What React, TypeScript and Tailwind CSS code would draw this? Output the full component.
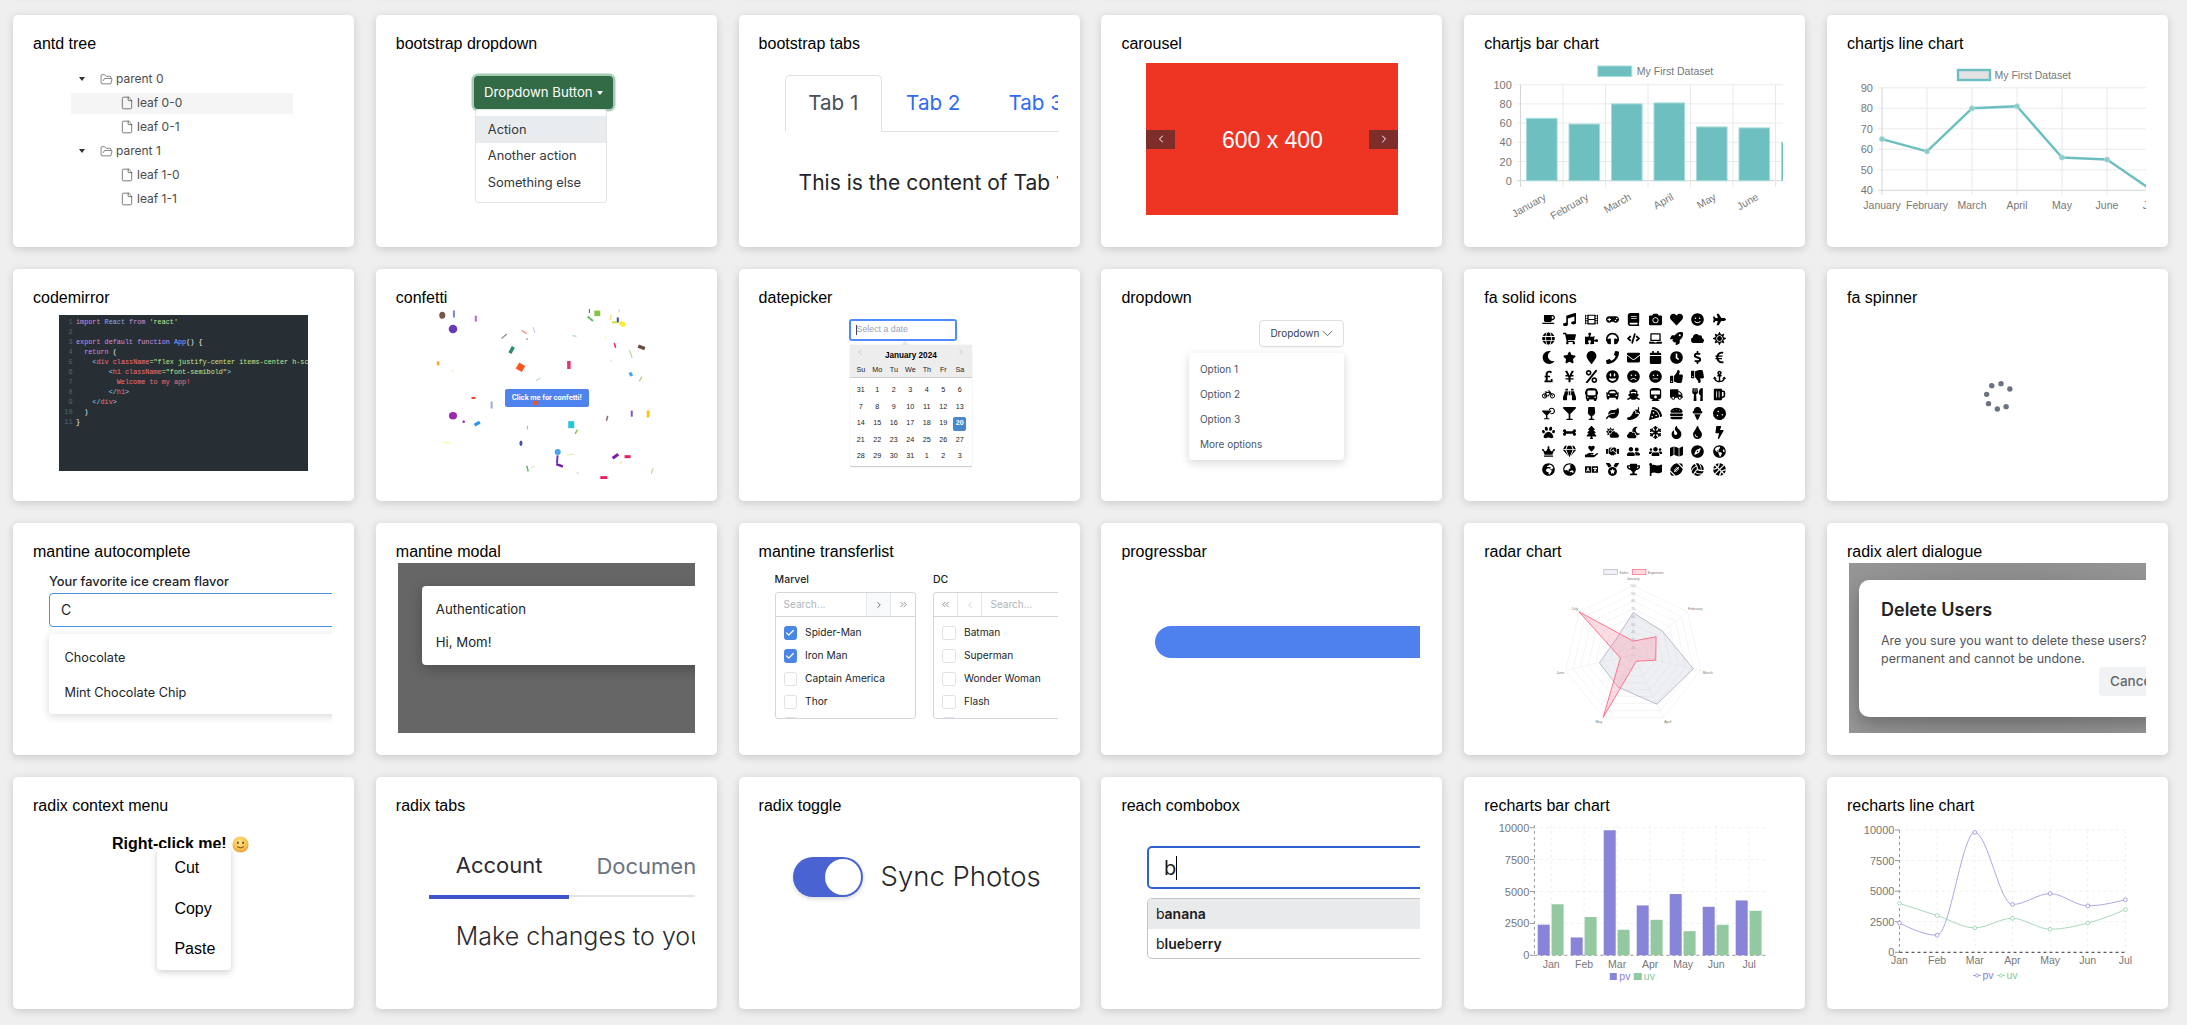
import React from 'react';
import { File, FolderOpen, ChevronLeft, ChevronRight, ChevronDown, ChevronsLeft, ChevronsRight, Check } from 'lucide-react';
import {
  FaCoffee, FaMusic, FaFilm, FaGamepad, FaBook, FaCamera, FaHeart, FaSmile, FaPlane,
  FaGlobe, FaShoppingCart, FaPuzzlePiece, FaHeadphones, FaCode, FaLaptop, FaRocket, FaCloud, FaSun,
  FaMoon, FaStar, FaMapMarker, FaPhone, FaEnvelope, FaCalendar, FaClock, FaDollarSign, FaEuroSign,
  FaPoundSign, FaYenSign, FaPercent, FaGrinAlt, FaFrown, FaMeh, FaThumbsUp, FaThumbsDown, FaAnchor,
  FaBicycle, FaBinoculars, FaBus, FaCar, FaShip, FaTrain, FaTruck, FaUtensils, FaBeer,
  FaCocktail, FaGlassMartini, FaWineGlass, FaLeaf, FaPepperHot, FaPizzaSlice, FaHamburger, FaIceCream, FaCookie,
  FaPaw, FaBone, FaTree, FaCloudSun, FaCloudMoon, FaSnowflake, FaFire, FaTint, FaBolt,
  FaCrown, FaGem, FaHandHoldingHeart, FaHandshake, FaUserFriends, FaUsers, FaMap, FaCompass, FaGlobeAmericas,
  FaGlobeAfrica, FaGlobeAsia, FaLanguage, FaMedal, FaTrophy, FaFlag, FaFootballBall, FaVolleyballBall, FaBasketballBall,
} from 'react-icons/fa';

const months = ['January', 'February', 'March', 'April', 'May', 'June', 'July'];
const SERIES = [65, 59, 80, 81, 56, 55, 40];
const CARD_SHADOW = 'shadow-[0_2px_8px_rgba(0,0,0,0.16)]';

function Card({ title, children }: { title: string; children: React.ReactNode }) {
  return (
    <div className={`h-[232px] w-[341px] rounded-[5px] bg-white ${CARD_SHADOW}`}>
      <div className="h-10 px-5 pt-[17px] text-[16px] leading-6 text-black">{title}</div>
      <div className="relative mx-[22px] h-[170px] w-[297px] overflow-hidden [font-family:Inter,sans-serif]">{children}</div>
    </div>
  );
}

function Caret() {
  return <span className="mx-[7.5px] h-0 w-0 border-x-[3px] border-t-[4px] border-x-transparent border-t-[#333]" />;
}

function AntdTree() {
  const Row = ({ label, parent, active }: { label: string; parent?: boolean; active?: boolean }) => (
    <div className="py-[1.5px]">
      <div className={`flex h-[21px] items-center text-[12px] text-[#4b4b4b] ${active ? 'bg-[#f5f5f5]' : ''}`}>
        {parent ? (
          <>
            <Caret />
            <FolderOpen size={13} strokeWidth={1.1} className="ml-[8px] mr-[3px] text-[#333]" />
          </>
        ) : (
          <File size={14} strokeWidth={1.1} className="ml-[49px] mr-[3px] text-[#333]" />
        )}
        <span>{label}</span>
      </div>
    </div>
  );
  return (
    <div className="ml-[36px] w-[222px] pt-[12px]">
      <Row label="parent 0" parent />
      <Row label="leaf 0-0" active />
      <Row label="leaf 0-1" />
      <Row label="parent 1" parent />
      <Row label="leaf 1-0" />
      <Row label="leaf 1-1" />
    </div>
  );
}

function BootstrapDropdown() {
  return (
    <div className="pl-[76px] pt-[21px]">
      <div className="flex h-[33px] w-[139px] items-center justify-center gap-[4px] rounded-[4px] bg-[#336b47] text-[13.2px] text-white shadow-[0_0_0_2.5px_#a5cdb4]">
        Dropdown Button
        <span className="h-0 w-0 border-x-[3.5px] border-t-[4px] border-x-transparent border-t-white" />
      </div>
      <div className="relative ml-[1px] h-[94px] w-[132px] rounded-[3px] border border-[#e4e4e4] bg-white py-[6px] text-[12.8px] text-[#33373c]">
        <div className="flex h-[26.6px] items-center bg-[#e9ecef] pl-[12px]">Action</div>
        <div className="flex h-[26.6px] items-center pl-[12px]">Another action</div>
        <div className="flex h-[26.6px] items-center pl-[12px]">Something else</div>
      </div>
    </div>
  );
}

function BootstrapTabs() {
  return (
    <div className="whitespace-nowrap pl-[24px] pt-[20px] text-[20.6px]">
      <div className="flex h-[57px] items-end border-b border-[#dee2e6]">
        <div className="-mb-px flex h-[57px] w-[97.5px] shrink-0 items-center justify-center rounded-t-[5px] border border-b-white border-[#dee2e6] bg-white text-[#495057]">Tab 1</div>
        <div className="flex h-[56px] shrink-0 items-center px-[24px] text-[#2f6bf2]">Tab 2</div>
        <div className="flex h-[56px] shrink-0 items-center pl-[24px] text-[#2f6bf2]">Tab 3</div>
      </div>
      <div className="pl-[14px] pt-[35px] text-[21px] leading-[32px] text-[#212529]">This is the content of Tab 1</div>
    </div>
  );
}

function Carousel() {
  return (
    <div className="ml-[23px] mt-[8px] flex h-[152px] w-[252px] items-center justify-between bg-[#ee3524] text-[23px] text-white [font-family:'Liberation_Sans',sans-serif]">
      <span className="flex h-[19px] w-[29px] items-center justify-center bg-[#7f2d2b]"><ChevronLeft size={12} strokeWidth={2} /></span>
      <span className="pt-[3px]">600 x 400</span>
      <span className="flex h-[19px] w-[29px] items-center justify-center bg-[#7f2d2b]"><ChevronRight size={12} strokeWidth={2} /></span>
    </div>
  );
}

function ChartBar() {
  const x0 = 1520.7;
  const y = (v: number) => 180.7 - v * 0.96;
  return (
    <svg viewBox="1486.2 55 297 170" className="h-full w-full [font-family:'Liberation_Sans',sans-serif]">
      <rect x="1598" y="66" width="34" height="10.5" fill="#6ebfbf" stroke="#a6dcdc" />
      <text x="1637" y="75" fontSize="10.5" fill="#777">My First Dataset</text>
      {[0, 20, 40, 60, 80, 100].map((v) => (
        <g key={v}>
          <line x1="1517" x2="1784" y1={y(v)} y2={y(v)} stroke={v === 0 ? '#d5d5d5' : '#ebebeb'} />
          <text x="1512" y={y(v) + 4} fontSize="11" textAnchor="end" fill="#777">{v}</text>
        </g>
      ))}
      {[0, 1, 2, 3, 4, 5, 6].map((i) => (
        <line key={i} x1={x0 + 42.5 * i} x2={x0 + 42.5 * i} y1="84.7" y2="187" stroke={i === 0 ? '#d5d5d5' : '#e9e9e9'} />
      ))}
      {SERIES.map((v, i) => (
        <rect key={i} x={x0 + 6 + 42.5 * i} y={y(v)} width="30.6" height={v * 0.96} fill="#6ebfbf" stroke="#a6dcdc" strokeWidth="1" />
      ))}
      {months.map((m, i) => (
        <text key={m} transform={`translate(${1547 + 42.5 * i},199) rotate(-30)`} fontSize="10.5" textAnchor="end" fill="#777">{m}</text>
      ))}
    </svg>
  );
}

function ChartLine() {
  const X = (i: number) => 1882 + 45 * i;
  const Y = (v: number) => 190.3 - (v - 40) * 2.05;
  const pts = SERIES.map((v, i) => `${X(i)},${Y(v)}`).join(' ');
  return (
    <svg viewBox="1849 55 297 170" className="h-full w-full [font-family:'Liberation_Sans',sans-serif]">
      <rect x="1958" y="70" width="32" height="10" fill="#e2e2e2" stroke="#6cbfc0" strokeWidth="2.4" />
      <text x="1994.5" y="79" fontSize="10.5" fill="#777">My First Dataset</text>
      {[40, 50, 60, 70, 80, 90].map((v) => (
        <g key={v}>
          <line x1="1878" x2="2147" y1={Y(v)} y2={Y(v)} stroke={v === 40 ? '#d5d5d5' : '#ececec'} />
          <text x="1873" y={Y(v) + 4} fontSize="11" textAnchor="end" fill="#777">{v}</text>
        </g>
      ))}
      {months.map((m, i) => (
        <g key={m}>
          <line x1={X(i)} x2={X(i)} y1="87.7" y2="195" stroke={i === 0 ? '#d5d5d5' : '#e9e9e9'} />
          <text x={X(i)} y="208.5" fontSize="10.5" textAnchor="middle" fill="#777">{m}</text>
        </g>
      ))}
      <polyline points={pts} fill="none" stroke="#6cbfc0" strokeWidth="2.4" strokeLinejoin="round" />
      {SERIES.map((v, i) => (
        <circle key={i} cx={X(i)} cy={Y(v)} r="2.6" fill="#8dcbcb" stroke="#a8dcdc" strokeWidth="0.8" />
      ))}
    </svg>
  );
}

const P = '#c792ea', B = '#82aaff', W = '#eeffff', G = '#c3e88d', C = '#89ddff', R = '#f07178';
const code: [string, string][][] = [
  [['import ', P], ['React ', B], ['from ', P], ["'react'", G]],
  [],
  [['export default function ', P], ['App', B], ['() {', W]],
  [['  return ', P], ['(', W]],
  [['    <', C], ['div ', R], ['className', R], ['="flex justify-center items-center h-screen">', G]],
  [['        <', C], ['h1 ', R], ['className', R], ['="font-semibold"', G], ['>', C]],
  [['          Welcome to my app!', R]],
  [['        </', C], ['h1', R], ['>', C]],
  [['    </', C], ['div', R], ['>', C]],
  [['  )', W]],
  [['}', W]],
];

function CodeMirror() {
  return (
    <div className="ml-[24px] mt-[6px] h-[156px] w-[249px] overflow-hidden bg-[#282f34] pt-[2.3px] text-[6.8px] leading-[10px] [font-family:'Liberation_Mono',monospace]">
      {code.map((line, i) => (
        <div key={i} className="flex h-[10px] whitespace-pre">
          <span className="w-[17px] shrink-0 pr-[3.5px] text-right text-[#56666f]">{i + 1}</span>
          <span>
            {line.map(([t, c], j) => (
              <span key={j} style={{ color: c }}>{t}</span>
            ))}
          </span>
        </div>
      ))}
    </div>
  );
}

// zoom-x, zoom-y, w, h, colour, rotation, ellipse?
const bits: [number, number, number, number, string, number, number?][] = [
  [950, 166, 6, 7, '#7a5548', 0, 1], [975, 162, 2, 7, '#7986cb', 0], [1022, 176, 2, 6, '#ba68c8', 0], [973, 207, 8.6, 8.6, '#673ab7', 0, 1],
  [1266, 153, 1, 4, '#9c27b0', 0], [1283, 160, 6, 5.5, '#8bc34a', 0], [1330, 152, 1, 3, '#c5cae9', 0], [1268, 176, 7, 2, '#66bb6a', 40],
  [1312, 172, 1.5, 5, '#ffe082', 10], [1327, 180, 2, 5, '#3949ab', 0], [1320, 187, 5, 2, '#cddc39', 0], [1337, 192, 7, 5, '#ffeb3b', 30, 1],
  [1126, 216, 6, 1.5, '#ef9a9a', 35], [1147, 210, 1.2, 6, '#c5cae9', -15], [1083, 229, 1.2, 7, '#a1887f', 50], [1132, 237, 1.5, 1.5, '#a1887f', 0],
  [1234, 228, 4, 1.5, '#b2dfdb', 15], [1301, 233, 1, 3, '#fff59d', -30], [1099, 270, 3.5, 7, '#2e8b73', 30], [1321, 256, 1.5, 5, '#e91e63', -15],
  [1378, 262, 7, 3.5, '#6d4c41', 20], [1355, 282, 1, 8, '#aed581', -20], [1312, 302, 1, 2.5, '#bbdefb', 0], [941, 310, 2.5, 4, '#ffa726', 0],
  [972, 332, 1.5, 1.5, '#ffe0b2', 0], [1118, 322, 7, 7, '#ff5722', 30], [1222, 315, 3.5, 8, '#e6336b', 0], [1156, 358, 5, 1, '#a5d6a7', -30],
  [1355, 343, 3, 4, '#42a5f5', -30], [1376, 357, 1, 5, '#9ccc65', 30], [1017, 414, 4, 2, '#f44336', 0], [1056, 435, 2, 7, '#9fa8da', 0],
  [973, 467, 8, 7.5, '#9c27b0', 0, 1], [996, 485, 2.5, 2.5, '#8e24aa', 0, 1], [1025, 491, 6, 3, '#2196f3', -30], [1304, 475, 1.5, 5, '#8d6e63', 15],
  [1357, 461, 2, 6, '#7e57c2', 0], [1392, 462, 2.5, 7, '#ffc107', 0], [1133, 503, 1, 4, '#bcaaa4', 10], [1227, 494, 6, 7, '#26c6da', 0],
  [1238, 515, 1.5, 5, '#8bc34a', 30], [961, 548, 6, 1.5, '#fff59d', 0], [1119, 550, 3, 5.6, '#3f51b5', 0, 1], [1198, 576, 6, 6, '#42a5f5', 0, 1],
  [1225, 584, 7, 1, '#e6ee9c', -10], [1197, 598, 2, 8, '#673ab7', 5], [1202, 616, 7, 2.5, '#7b1fa2', 20], [1322, 589, 7, 3, '#7b1fa2', -35],
  [1348, 590, 6, 3, '#e91e63', 0], [1334, 608, 1, 3, '#ffe082', 30], [1133, 626, 1.5, 6, '#66bb6a', -15], [1145, 620, 4, 1, '#c8e6c9', -30],
  [1241, 639, 1, 3, '#f8bbd0', -30], [1297, 653, 7, 3, '#e91e63', 0], [1401, 632, 1, 6, '#aed581', 20],
];

function Confetti() {
  return (
    <div className="h-full">
      <div className="ml-[107px] mt-[80px] flex h-[18px] w-[84px] items-center justify-center rounded-[2px] bg-[#4f84f0] text-[6.9px] font-bold text-white">Click me for confetti!</div>
      <svg viewBox="398 309 297 170" className="absolute inset-0 h-full w-full">
        {bits.map(([zx, zy, w, h, c, r, e], i) => {
          const x = zx / 2.148, y = 260 + zy / 3;
          const t = `rotate(${r} ${x} ${y})`;
          return e
            ? <ellipse key={i} cx={x} cy={y} rx={w / 2} ry={h / 2} fill={c} transform={t} />
            : <rect key={i} x={x - w / 2} y={y - h / 2} width={w} height={h} fill={c} transform={t} />;
        })}
        <circle cx={1151 / 2.148} cy={260 + 429 / 3} r="2.4" fill="#f4511e" />
      </svg>
    </div>
  );
}

function DatePicker() {
  const rows = [[31, 1, 2, 3, 4, 5, 6], [7, 8, 9, 10, 11, 12, 13], [14, 15, 16, 17, 18, 19, 20], [21, 22, 23, 24, 25, 26, 27], [28, 29, 30, 31, 1, 2, 3]];
  return (
    <div className="pl-[89px] pt-[10px] [font-family:'Liberation_Sans',sans-serif]">
      <div className="-ml-[1px] flex h-[22px] w-[108px] items-center rounded-[3px] border-2 border-[#4d8bff] pl-[5px] text-[8.8px] text-[#9ca3af]">
        <span className="h-[10px] w-px bg-[#444]" />Select a date
      </div>
      <div className="relative mt-[4px] h-[122px] w-[122.5px] rounded-[2px] border-b border-[#cfcfcf] bg-white shadow-[0_0_1px_rgba(0,0,0,0.3)]">
        <span className="absolute left-[51px] top-[-4px] h-0 w-0 border-x-[4px] border-b-[4px] border-x-transparent border-b-[#e8e8e8]" />
        <div className="relative h-[33px] border-b border-[#cfcfcf] bg-[#ededed] px-[3px] text-center">
          <ChevronLeft size={10} strokeWidth={1.5} className="absolute left-[5px] top-[2px] text-[#b5b5b5]" />
          <ChevronRight size={10} strokeWidth={1.5} className="absolute right-[6px] top-[2px] text-[#b5b5b5]" />
          <div className="pt-[6px] text-[8.2px] font-bold leading-[10px] text-black">January 2024</div>
          <div className="grid grid-cols-[repeat(7,16.5px)] pt-[4px] text-[7.2px] leading-[9px] text-[#222]">
            {['Su', 'Mo', 'Tu', 'We', 'Th', 'Fr', 'Sa'].map((d) => <span key={d}>{d}</span>)}
          </div>
        </div>
        <div className="grid grid-cols-[repeat(7,16.5px)] auto-rows-[16.5px] px-[3px] pt-[4.5px] text-center text-[7.2px] text-[#222]">
          {rows.flat().map((d, i) => (
            <span key={i} className="flex items-center justify-center">
              <span className={d === 20 ? 'flex h-[14px] w-[13px] items-center justify-center rounded-[2px] bg-[#4a87c8] font-bold text-white' : ''}>{d}</span>
            </span>
          ))}
        </div>
      </div>
    </div>
  );
}

function DropdownMenu() {
  return (
    <div className="flex flex-col items-end pr-[76px] pt-[11px] text-[#4b5563]">
      <div className="flex h-[27px] w-[85px] items-center justify-center rounded-[4px] border border-[#dcdfe4] text-[10px] text-[#374151] shadow-[0_1px_1px_rgba(0,0,0,0.05)]">
        Dropdown <ChevronDown size={17} strokeWidth={1.1} className="-mr-[3px]" />
      </div>
      <div className="mt-[6px] flex h-[107px] w-[155px] flex-col justify-center rounded-[4px] bg-white pl-[10.5px] pt-[1px] text-[10px] shadow-[0_3px_10px_rgba(0,0,0,0.16)]">
        {['Option 1', 'Option 2', 'Option 3', 'More options'].map((o) => (
          <div key={o} className="flex h-[25.2px] items-center">{o}</div>
        ))}
      </div>
    </div>
  );
}

const faIcons = [
  FaCoffee, FaMusic, FaFilm, FaGamepad, FaBook, FaCamera, FaHeart, FaSmile, FaPlane,
  FaGlobe, FaShoppingCart, FaPuzzlePiece, FaHeadphones, FaCode, FaLaptop, FaRocket, FaCloud, FaSun,
  FaMoon, FaStar, FaMapMarker, FaPhone, FaEnvelope, FaCalendar, FaClock, FaDollarSign, FaEuroSign,
  FaPoundSign, FaYenSign, FaPercent, FaGrinAlt, FaFrown, FaMeh, FaThumbsUp, FaThumbsDown, FaAnchor,
  FaBicycle, FaBinoculars, FaBus, FaCar, FaShip, FaTrain, FaTruck, FaUtensils, FaBeer,
  FaCocktail, FaGlassMartini, FaWineGlass, FaLeaf, FaPepperHot, FaPizzaSlice, FaHamburger, FaIceCream, FaCookie,
  FaPaw, FaBone, FaTree, FaCloudSun, FaCloudMoon, FaSnowflake, FaFire, FaTint, FaBolt,
  FaCrown, FaGem, FaHandHoldingHeart, FaHandshake, FaUserFriends, FaUsers, FaMap, FaCompass, FaGlobeAmericas,
  FaGlobeAfrica, FaGlobeAsia, FaLanguage, FaMedal, FaTrophy, FaFlag, FaFootballBall, FaVolleyballBall, FaBasketballBall,
];

function FaGrid() {
  return (
    <div className="ml-[51.8px] mt-[1.6px] grid grid-cols-[repeat(9,21.3px)] auto-rows-[18.75px] text-black">
      {faIcons.map((I, i) => (
        <span key={i} className="flex items-center justify-center"><I size={13} /></span>
      ))}
    </div>
  );
}

function Spinner() {
  const dots = [[1167, 371], [1186, 387], [1147, 377], [1136, 403], [1140, 431], [1159, 447], [1178, 440]];
  return (
    <svg viewBox="1849 309 297 170" className="h-full w-full">
      {dots.map(([x, y], i) => (
        <circle key={i} cx={1460 + x / 2.157} cy={260 + y / 3} r="2.7" fill="#6b7280" />
      ))}
    </svg>
  );
}

function Autocomplete() {
  return (
    <div className="w-[420px] pl-[14px] pt-[11px] text-[14px] text-[#212529]">
      <div className="h-4 text-[12.8px] font-medium leading-4">Your favorite ice cream flavor</div>
      <div className="mt-[3px] flex h-[33.5px] items-center rounded-[4px] border border-[#4a90e2] pl-[11px]">C</div>
      <div className="mt-[7.5px] h-[80px] rounded-[4px] bg-white pb-[5px] pl-[15.5px] pt-[6px] text-[12.7px] shadow-[0_2px_9px_rgba(0,0,0,0.16)]">
        <div className="flex h-[35px] items-center">Chocolate</div>
        <div className="flex h-[35px] items-center">Mint Chocolate Chip</div>
      </div>
    </div>
  );
}

function MantineModal() {
  return (
    <div className="h-full bg-[#666666] pl-[24px] pt-[23px]">
      <div className="h-[79px] w-[400px] rounded-[4px] bg-white pl-[14px] pt-[13px] text-[13.2px] text-[#212529] shadow-[0_4px_14px_rgba(0,0,0,0.25)]">
        <div className="flex h-[22px] items-center">Authentication</div>
        <div className="mt-[11px] flex h-[22px] items-center">Hi, Mom!</div>
      </div>
    </div>
  );
}

function Checkbox({ on }: { on?: boolean }) {
  return (
    <span className={`flex h-[14px] w-[13.5px] shrink-0 items-center justify-center rounded-[2.5px] border ${on ? 'border-[#4a86e8] bg-[#4a86e8]' : 'border-[#dee2e6] bg-white'}`}>
      {on && <Check size={10} strokeWidth={3} className="text-white" />}
    </span>
  );
}

function TransferItems({ items, checked, left }: { items: string[]; checked: number; left: string }) {
  return (
    <div className={`pt-[4px] text-[10.2px] text-[#212529] ${left}`}>
      {items.map((t, i) => (
        <div key={t} className="flex h-[23px] items-center gap-[8px]">
          <Checkbox on={i < checked} />
          {t}
        </div>
      ))}
      <div className="mt-[4px]"><Checkbox /></div>
    </div>
  );
}

function TransferList() {
  return (
    <div className="flex w-[400px] gap-[16.7px] pl-[14px] pt-[9px]">
      <div className="w-[141.7px]">
        <div className="h-[16px] text-[10.5px] font-medium leading-4 text-[#212529]">Marvel</div>
        <div className="mt-[4px] h-[127px] overflow-hidden rounded-[3px] border border-[#d3d6da]">
          <div className="flex h-[24px] border-b border-[#d3d6da] text-[#495057]">
            <span className="flex flex-1 items-center pl-[8px] text-[10px] text-[#adb5bd]">Search...</span>
            <span className="flex w-[25px] items-center justify-center border-x border-[#e6e8ea] bg-[#f8f9fa]"><ChevronRight size={10} /></span>
            <span className="flex w-[24px] items-center justify-center"><ChevronsRight size={11} strokeWidth={1.4} /></span>
          </div>
          <TransferItems items={['Spider-Man', 'Iron Man', 'Captain America', 'Thor']} checked={2} left="pl-[8px]" />
        </div>
      </div>
      <div className="w-[141.7px]">
        <div className="h-[16px] text-[10.5px] font-medium leading-4 text-[#212529]">DC</div>
        <div className="mt-[4px] h-[127px] overflow-hidden rounded-[3px] border border-[#d3d6da]">
          <div className="flex h-[24px] border-b border-[#d3d6da] text-[#495057]">
            <span className="flex w-[24px] items-center justify-center border-r border-[#e6e8ea]"><ChevronsLeft size={11} strokeWidth={1.4} /></span>
            <span className="flex w-[24.5px] items-center justify-center border-r border-[#e6e8ea] text-[#c4c8cc]"><ChevronLeft size={10} /></span>
            <span className="flex flex-1 items-center pl-[8px] text-[10px] text-[#adb5bd]">Search...</span>
          </div>
          <TransferItems items={['Batman', 'Superman', 'Wonder Woman', 'Flash']} checked={0} left="pl-[8.5px]" />
        </div>
      </div>
    </div>
  );
}

function Progress() {
  return (
    <div className="pl-[32px] pt-[63px]">
      <div className="h-[32px] w-[300px] rounded-l-full bg-[#4f81ee]" />
    </div>
  );
}

function Radar() {
  const cx = 1633.4, cy = 655, R = 69.3;
  const V = (i: number, v: number) => {
    const r = ((v - 10) / 90) * R;
    const a = (i * 2 * Math.PI) / 7;
    return [cx + r * Math.sin(a), cy - r * Math.cos(a)];
  };
  const poly = (vals: number[]) => vals.map((v, i) => V(i, v).join(',')).join(' ');
  const labels: [string, number, number][] = [
    ['January', 1633.4, 580], ['February', 1695.5, 610], ['March', 1708, 674], ['April', 1668, 722.5], ['May', 1599, 722.5], ['June', 1560.6, 674], ['July', 1575, 610],
  ];
  return (
    <svg viewBox="1486.2 563 297 170" className="h-full w-full [font-family:'Liberation_Sans',sans-serif]">
      <rect x="1604" y="569.4" width="13.6" height="5" fill="#f1f1f5" stroke="#b3b5c6" strokeWidth="0.7" />
      <text x="1619.5" y="573.5" fontSize="3.6" fill="#777">Sales</text>
      <rect x="1632.5" y="569.4" width="13.6" height="5" fill="#ffd9e0" stroke="#ff6384" strokeWidth="0.7" />
      <text x="1648" y="573.5" fontSize="3.6" fill="#777">Expenses</text>
      {[20, 30, 40, 50, 60, 70, 80, 90, 100].map((v) => (
        <polygon key={v} points={poly([v, v, v, v, v, v, v])} fill="none" stroke="#efefef" strokeWidth="0.6" />
      ))}
      {[0, 1, 2, 3, 4, 5, 6].map((i) => {
        const [x, y] = V(i, 100);
        return <line key={i} x1={cx} y1={cy} x2={x} y2={y} stroke="#efefef" strokeWidth="0.6" />;
      })}
      <polygon points={poly([65, 59, 90, 81, 56, 55, 40])} fill="rgba(179,181,198,0.22)" stroke="#b3b5c6" strokeWidth="0.9" />
      <polygon points={poly([28, 48, 40, 19, 100, 27, 100])} fill="rgba(255,99,132,0.22)" stroke="#ff6384" strokeWidth="0.9" />
      {[20, 30, 40, 50, 60, 70, 80, 90, 100].map((v) => (
        <text key={v} x={cx} y={cy - ((v - 10) / 90) * R + 1.3} fontSize="3.4" textAnchor="middle" fill="#aaa">{v}</text>
      ))}
      {labels.map(([t, x, y]) => (
        <text key={t} x={x} y={y} fontSize="3.6" textAnchor="middle" fill="#777">{t}</text>
      ))}
    </svg>
  );
}

function AlertDialog() {
  return (
    <div className="h-full bg-[radial-gradient(ellipse_at_center,#808083,#969696)] pl-[10px] pt-[17px]">
      <div className="h-[137px] w-[420px] rounded-[10px] bg-white pl-[22px] pt-[18px] shadow-[0_8px_16px_rgba(0,0,0,0.22)]">
        <div className="h-[24px] text-[18px] font-semibold leading-6 text-[#232326]">Delete Users</div>
        <div className="mt-[10px] whitespace-nowrap text-[12.5px] leading-[18px] text-[#55565b]">
          <div>Are you sure you want to delete these users? This action is</div>
          <div>permanent and cannot be undone.</div>
        </div>
        <div className="ml-[218px] mt-[-1px] flex h-[29px] w-[80px] items-center rounded-[4px] bg-[#f1f2f4] pl-[11px] text-[13.5px] font-medium text-[#66676b]">Cancel</div>
      </div>
    </div>
  );
}

function ContextMenu() {
  return (
    <div className="pl-[77px] pt-[15px]">
      <div className="flex h-6 items-center text-[16px] font-bold leading-6 text-black [font-family:'Liberation_Sans',sans-serif]">
        Right-click me!
        <svg width="17" height="17" viewBox="0 0 20 20" className="ml-[5px]">
          <defs>
            <radialGradient id="emo" cx="45%" cy="35%" r="70%">
              <stop offset="0%" stopColor="#fde68a" />
              <stop offset="65%" stopColor="#f9c04a" />
              <stop offset="100%" stopColor="#e8923a" />
            </radialGradient>
          </defs>
          <circle cx="10" cy="10" r="9.5" fill="url(#emo)" />
          <ellipse cx="7" cy="8" rx="1" ry="1.4" fill="#5b3a1a" />
          <ellipse cx="13" cy="8" rx="1" ry="1.4" fill="#5b3a1a" />
          <path d="M6 12.5 Q10 15.5 14 12.5" stroke="#5b3a1a" strokeWidth="1" fill="none" />
        </svg>
      </div>
      <div className="absolute left-[122.4px] top-[30.7px] h-[122.6px] w-[74px] rounded-[4px] bg-white pl-[17px] text-[16px] text-black shadow-[0_2px_7px_rgba(0,0,0,0.2)] [font-family:'Liberation_Sans',sans-serif]">
        {['Cut', 'Copy', 'Paste'].map((t) => (
          <div key={t} className="flex h-[40.7px] items-center">{t}</div>
        ))}
      </div>
    </div>
  );
}

function RadixTabs() {
  return (
    <div className="w-[500px] pl-[31px] pt-[27px] whitespace-nowrap">
      <div className="flex h-[53px] w-[470px] border-b-2 border-[#e4e4ea]">
        <div className="-mb-[2px] flex h-[55px] w-[140.6px] items-center justify-center border-b-[4px] border-[#3e54c8] pb-[8px] text-[22px] text-[#2b2b30]">Account</div>
        <div className="flex h-[53px] items-center pb-[8px] pl-[27px] text-[22px] text-[#6b7280]">Documents</div>
      </div>
      <div className="pl-[27px] pt-[23px] text-[25px] font-light leading-8 text-[#2b2b30]">Make changes to your account</div>
    </div>
  );
}

function Toggle() {
  return (
    <div className="flex items-center gap-[18px] pl-[32px] pt-[39px] whitespace-nowrap">
      <div className="flex h-[40px] w-[70px] items-center justify-end rounded-full bg-[#4a63d2] pr-[2px] shadow-[0_2px_4px_rgba(0,0,0,0.15)]">
        <span className="h-[36px] w-[36px] rounded-full bg-white" />
      </div>
      <span className="text-[27.5px] font-light text-[#27272a]">Sync Photos</span>
    </div>
  );
}

function Combobox() {
  return (
    <div className="w-[420px] pl-[23.6px] pt-[29px] text-[14px] text-[#1a1a1a]">
      <div className="flex h-[43px] items-center rounded-[5px] border-[2.5px] border-[#2f62cf] pl-[15px] text-[20px]">
        b<span className="h-[24px] w-px bg-black" />
      </div>
      <div className="mt-[9px] h-[61px] overflow-hidden rounded-[5px] border border-[#c4c4c4]">
        <div className="flex h-[29.5px] items-center bg-[#e9eaec] pl-[8px]">b<b className="font-semibold">anana</b></div>
        <div className="flex h-[29.5px] items-center pl-[8px]">b<b className="font-semibold">lue</b>b<b className="font-semibold">erry</b></div>
      </div>
    </div>
  );
}

const pv = [2400, 1398, 9800, 3908, 4800, 3800, 4300];
const uv = [4000, 3000, 2000, 2780, 1890, 2390, 3490];
const short = ['Jan', 'Feb', 'Mar', 'Apr', 'May', 'Jun', 'Jul'];
const TICKS = [0, 2500, 5000, 7500, 10000];

function RechartsBar() {
  const Y = (v: number) => 955.3 - v * 0.01276;
  const X = (i: number) => 1551.3 + 33 * i;
  return (
    <svg viewBox="1486.2 817 297 170" className="h-full w-full [font-family:'Liberation_Sans',sans-serif]">
      {TICKS.map((t) => (
        <g key={t}>
          {t > 0 && <line x1="1534.6" x2="1766" y1={Y(t)} y2={Y(t)} stroke="#f0f0f0" strokeDasharray="3 3" />}
          <line x1="1530" x2="1534.6" y1={Y(t)} y2={Y(t)} stroke="#999" />
          <text x="1529.5" y={Y(t) + 4} fontSize="11" textAnchor="end" fill="#777">{t}</text>
        </g>
      ))}
      {[...short.keys()].map((i) => (
        <line key={i} x1={X(i)} x2={X(i)} y1="825" y2="955" stroke="#f0f0f0" strokeDasharray="3 3" />
      ))}
      <line x1="1534.6" x2="1534.6" y1="825" y2="955.3" stroke="#999" strokeDasharray="3 3" />
      <line x1="1534.6" x2="1766" y1="955.3" y2="955.3" stroke="#999" strokeDasharray="3 3" />
      {short.map((m, i) => (
        <g key={m}>
          <rect x={X(i) - 13.4} y={Y(pv[i])} width="12" height={pv[i] * 0.01276} fill="#8884d8" />
          <rect x={X(i) + 0.5} y={Y(uv[i])} width="12" height={uv[i] * 0.01276} fill="#93c9a0" />
          <text x={X(i)} y="967.5" fontSize="10.5" textAnchor="middle" fill="#777">{m}</text>
        </g>
      ))}
      <rect x="1610" y="973" width="7" height="7" fill="#8884d8" />
      <text x="1619.5" y="980" fontSize="10.5" fill="#8884d8">pv</text>
      <rect x="1634" y="973" width="8" height="7" fill="#93c9a0" />
      <text x="1644" y="980" fontSize="10.5" fill="#82ca9d">uv</text>
    </svg>
  );
}

function mono(pts: [number, number][]) {
  const n = pts.length;
  const s: number[] = [];
  const h: number[] = [];
  for (let i = 0; i < n - 1; i++) {
    h[i] = pts[i + 1][0] - pts[i][0];
    s[i] = (pts[i + 1][1] - pts[i][1]) / h[i];
  }
  const t: number[] = [];
  for (let i = 1; i < n - 1; i++) {
    const p = (s[i - 1] * h[i] + s[i] * h[i - 1]) / (h[i - 1] + h[i]);
    t[i] = (Math.sign(s[i - 1]) + Math.sign(s[i])) * Math.min(Math.abs(s[i - 1]), Math.abs(s[i]), 0.5 * Math.abs(p));
  }
  t[0] = (3 * s[0] - t[1]) / 2;
  t[n - 1] = (3 * s[n - 2] - t[n - 2]) / 2;
  let d = `M${pts[0][0]},${pts[0][1]}`;
  for (let i = 0; i < n - 1; i++) {
    const k = h[i] / 3;
    d += `C${pts[i][0] + k},${pts[i][1] + k * t[i]} ${pts[i + 1][0] - k},${pts[i + 1][1] - k * t[i + 1]} ${pts[i + 1][0]},${pts[i + 1][1]}`;
  }
  return d;
}

function RechartsLine() {
  const Y = (v: number) => 952.3 - v * 0.01223;
  const X = (i: number) => 1899.5 + 37.65 * i;
  const a = pv.map((v, i) => [X(i), Y(v)] as [number, number]);
  const b = uv.map((v, i) => [X(i), Y(v)] as [number, number]);
  return (
    <svg viewBox="1849 817 297 170" className="h-full w-full [font-family:'Liberation_Sans',sans-serif]">
      {TICKS.map((t) => (
        <g key={t}>
          {t > 0 && <line x1="1899.5" x2="2125.5" y1={Y(t)} y2={Y(t)} stroke="#f0f0f0" strokeDasharray="3 3" />}
          <line x1="1895" x2="1899.5" y1={Y(t)} y2={Y(t)} stroke="#999" />
          <text x="1894.4" y={Y(t) + 4} fontSize="11" textAnchor="end" fill="#777">{t}</text>
        </g>
      ))}
      {short.map((m, i) => (
        <g key={m}>
          {i > 0 && <line x1={X(i)} x2={X(i)} y1="830" y2="952.3" stroke="#f0f0f0" strokeDasharray="3 3" />}
          <text x={X(i)} y="963.5" fontSize="10.5" textAnchor="middle" fill="#777">{m}</text>
        </g>
      ))}
      <line x1="1899.5" x2="1899.5" y1="830" y2="952.3" stroke="#999" strokeDasharray="3 3" />
      <line x1="1899.5" x2="2125.5" y1="952.3" y2="952.3" stroke="#333" strokeDasharray="3 3" />
      <path d={mono(a)} fill="none" stroke="#8884d8" strokeWidth="0.7" />
      <path d={mono(b)} fill="none" stroke="#82ca9d" strokeWidth="0.7" />
      {a.map(([x, y], i) => <circle key={i} cx={x} cy={y} r="1.9" fill="#fff" stroke="#8884d8" strokeWidth="0.7" />)}
      {b.map(([x, y], i) => <circle key={i} cx={x} cy={y} r="1.9" fill="#fff" stroke="#82ca9d" strokeWidth="0.7" />)}
      <line x1="1973" x2="1981" y1="975.5" y2="975.5" stroke="#8884d8" strokeWidth="0.8" />
      <circle cx="1977" cy="975.5" r="1.6" fill="#fff" stroke="#8884d8" strokeWidth="0.7" />
      <text x="1982.5" y="979" fontSize="10.5" fill="#8884d8">pv</text>
      <line x1="1997" x2="2005" y1="975.5" y2="975.5" stroke="#82ca9d" strokeWidth="0.8" />
      <circle cx="2001" cy="975.5" r="1.6" fill="#fff" stroke="#82ca9d" strokeWidth="0.7" />
      <text x="2006.5" y="979" fontSize="10.5" fill="#82ca9d">uv</text>
    </svg>
  );
}

export default function App() {
  return (
    <div className="h-[1025px] overflow-hidden bg-[#efefef] pl-[13px] [font-family:'Liberation_Sans',Arial,sans-serif]">
      <div className="-mt-[239px] grid grid-cols-[repeat(6,341px)] gap-x-[21.8px] gap-y-[22px]">
        {[0, 1, 2, 3, 4, 5].map((i) => (
          <div key={i} className={`h-[232px] w-[341px] rounded-[5px] bg-white ${CARD_SHADOW}`} />
        ))}
        <Card title="antd tree"><AntdTree /></Card>
        <Card title="bootstrap dropdown"><BootstrapDropdown /></Card>
        <Card title="bootstrap tabs"><BootstrapTabs /></Card>
        <Card title="carousel"><Carousel /></Card>
        <Card title="chartjs bar chart"><ChartBar /></Card>
        <Card title="chartjs line chart"><ChartLine /></Card>
        <Card title="codemirror"><CodeMirror /></Card>
        <Card title="confetti"><Confetti /></Card>
        <Card title="datepicker"><DatePicker /></Card>
        <Card title="dropdown"><DropdownMenu /></Card>
        <Card title="fa solid icons"><FaGrid /></Card>
        <Card title="fa spinner"><Spinner /></Card>
        <Card title="mantine autocomplete"><Autocomplete /></Card>
        <Card title="mantine modal"><MantineModal /></Card>
        <Card title="mantine transferlist"><TransferList /></Card>
        <Card title="progressbar"><Progress /></Card>
        <Card title="radar chart"><Radar /></Card>
        <Card title="radix alert dialogue"><AlertDialog /></Card>
        <Card title="radix context menu"><ContextMenu /></Card>
        <Card title="radix tabs"><RadixTabs /></Card>
        <Card title="radix toggle"><Toggle /></Card>
        <Card title="reach combobox"><Combobox /></Card>
        <Card title="recharts bar chart"><RechartsBar /></Card>
        <Card title="recharts line chart"><RechartsLine /></Card>
      </div>
    </div>
  );
}
